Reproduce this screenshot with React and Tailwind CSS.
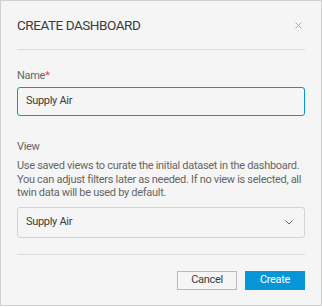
import React from "react";

const font = { fontFamily: 'Roboto, "Noto Sans", sans-serif' };

export default function App() {
  return (
    <div style={font} className="w-[322px] h-[307px] bg-white">
      <div className="w-[322px] h-[306px] bg-[#f5f5f5] border border-[#d0d0d0] flex flex-col px-4">
        <div className="flex items-center justify-between h-[48px] pt-[1px]">
          <div className="text-[13.5px] tracking-[-0.45px] text-[#3c3c3c]">CREATE DASHBOARD</div>
          <svg width="7" height="7" viewBox="0 0 7 7" className="mr-[3px]">
            <path d="M0.5 0.5 L6.5 6.5 M6.5 0.5 L0.5 6.5" stroke="#adadad" strokeWidth="1" />
          </svg>
        </div>
        <div className="h-px bg-[#dcdcdc]" />
        <div className="mt-[19px] text-[11px] tracking-[-0.3px] leading-[14px] text-[#666]">
          Name<span className="text-[#ec4a41]">*</span>
        </div>
        <div className="mt-[4px] h-[29px] border border-[#0696d7] rounded-[3px] bg-[#f5f5f5] flex items-center px-[8px] text-[11px] tracking-[-0.3px] text-[#3c3c3c]">
          Supply Air
        </div>
        <div className="mt-[24px] text-[11px] tracking-[-0.3px] leading-[14px] text-[#666]">View</div>
        <div className="mt-[5px] text-[11px] tracking-[-0.3px] leading-[13.5px] text-[#666]">
          Use saved views to curate the initial dataset in the dashboard. You can adjust filters later as needed. If no view is selected, all twin data will be used by default.
        </div>
        <div className="mt-[7px] h-[31px] border border-[#d4d4d4] rounded-[3px] bg-[#f5f5f5] flex items-center justify-between px-[8px] text-[11px] tracking-[-0.3px] text-[#3c3c3c]">
          <span>Supply Air</span>
          <svg width="8" height="5" viewBox="0 0 8 5" className="mr-[3px]">
            <path d="M0.5 0.5 L4 4 L7.5 0.5" stroke="#666" strokeWidth="1" fill="none" />
          </svg>
        </div>
        <div className="mt-[16px] h-px bg-[#dcdcdc]" />
        <div className="mt-[16px] flex justify-end gap-[8px]">
          <button className="w-[60px] h-[19px] border border-[#b9b9b9] bg-[#f5f5f5] text-[11px] tracking-[-0.3px] text-[#3c3c3c] flex items-center justify-center">
            Cancel
          </button>
          <button className="w-[60px] h-[19px] bg-[#0696d7] text-[11px] tracking-[-0.3px] text-white flex items-center justify-center">
            Create
          </button>
        </div>
      </div>
    </div>
  );
}
